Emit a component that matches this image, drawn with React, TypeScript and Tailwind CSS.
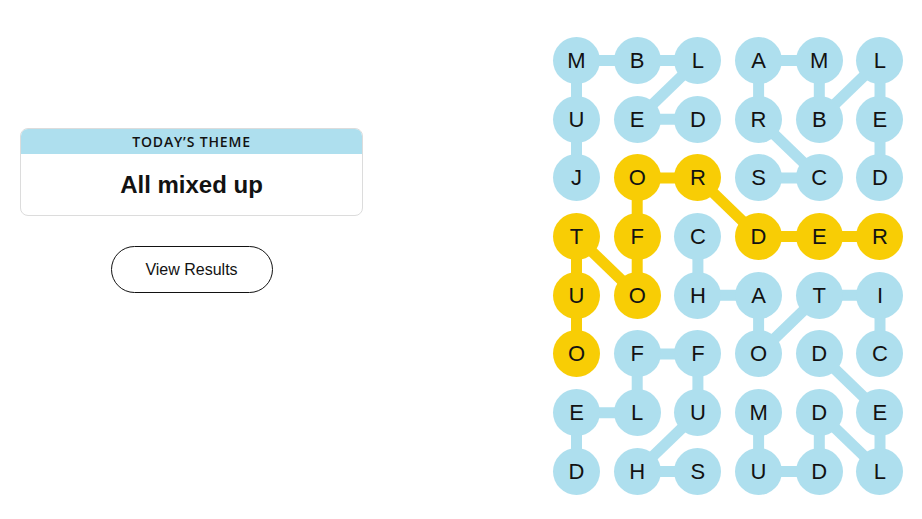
const BLUE = "#aedfee";
const YELLOW = "#f8cd05";

const LETTERS = [
  "MBLAML",
  "UEDRBE",
  "JORSCD",
  "TFCDER",
  "UOHATI",
  "OFFODC",
  "ELUMDE",
  "DHSUDL",
];

// [row, col] pairs for each found word, in reading order
type Cell = [number, number];
type Word = { cells: Cell[]; spangram?: boolean };

const WORDS: Word[] = [
  { cells: [[2, 0], [1, 0], [0, 0], [0, 1], [0, 2], [1, 1], [1, 2]] },
  { cells: [[2, 3], [2, 4], [1, 3], [0, 3], [0, 4], [1, 4], [0, 5], [1, 5], [2, 5]] },
  {
    spangram: true,
    cells: [[5, 0], [4, 0], [3, 0], [4, 1], [3, 1], [2, 1], [2, 2], [3, 3], [3, 4], [3, 5]],
  },
  { cells: [[3, 2], [4, 2], [4, 3], [5, 3], [4, 4], [4, 5], [5, 5]] },
  { cells: [[7, 2], [7, 1], [6, 2], [5, 2], [5, 1], [6, 1], [6, 0], [7, 0]] },
  { cells: [[6, 3], [7, 3], [7, 4], [6, 4], [7, 5], [6, 5], [5, 4]] },
];

const D = 47;
const GX = 13.7;
const GY = 11.7;
const W = D * 6 + GX * 5;
const H = D * 8 + GY * 7;

const cx = (c: number) => D / 2 + c * (D + GX);
const cy = (r: number) => D / 2 + r * (D + GY);

function fillFor(r: number, c: number) {
  const w = WORDS.find((w) => w.cells.some(([a, b]) => a === r && b === c));
  return w?.spangram ? YELLOW : BLUE;
}

function Board() {
  return (
    <div className="relative shrink-0" style={{ width: W, height: H }}>
      <svg className="absolute inset-0" width={W} height={H}>
        {WORDS.map((w, i) =>
          w.cells.slice(1).map(([r, c], j) => {
            const [pr, pc] = w.cells[j];
            return (
              <line
                key={`${i}-${j}`}
                x1={cx(pc)}
                y1={cy(pr)}
                x2={cx(c)}
                y2={cy(r)}
                stroke={w.spangram ? YELLOW : BLUE}
                strokeWidth={11}
              />
            );
          }),
        )}
      </svg>
      <div className="relative grid grid-cols-[repeat(6,47px)] gap-x-[13.7px] gap-y-[11.7px]">
        {LETTERS.map((row, r) =>
          row.split("").map((ch, c) => (
            <div
              key={`${r}-${c}`}
              className="flex h-[47px] w-[47px] items-center justify-center rounded-full text-[22px] text-[#121212] font-['Liberation_Sans',sans-serif]"
              style={{ background: fillFor(r, c) }}
            >
              {ch}
            </div>
          )),
        )}
      </div>
    </div>
  );
}

export default function App() {
  return (
    <div className="flex h-[519px] w-[922px] bg-white pl-5 font-['Liberation_Sans',sans-serif] text-[#121212]">
      <div className="mt-[128px] flex w-[343px] shrink-0 flex-col items-center">
        <div className="w-full overflow-hidden rounded-lg border border-[#dcdcdc]">
          <div className="flex h-[25px] items-center justify-center bg-[#aedfee] text-[14px] font-semibold tracking-[0.06em] font-['Open_Sans',sans-serif]">
            TODAY’S THEME
          </div>
          <div className="flex h-[61px] items-center justify-center text-[24px] font-bold">
            All mixed up
          </div>
        </div>
        <button className="mt-[30px] flex h-[47px] w-[162px] items-center justify-center rounded-full border border-[#121212] text-[16px]">
          View Results
        </button>
      </div>
      <div className="ml-[190px] mt-[37px] shrink-0">
        <Board />
      </div>
    </div>
  );
}
